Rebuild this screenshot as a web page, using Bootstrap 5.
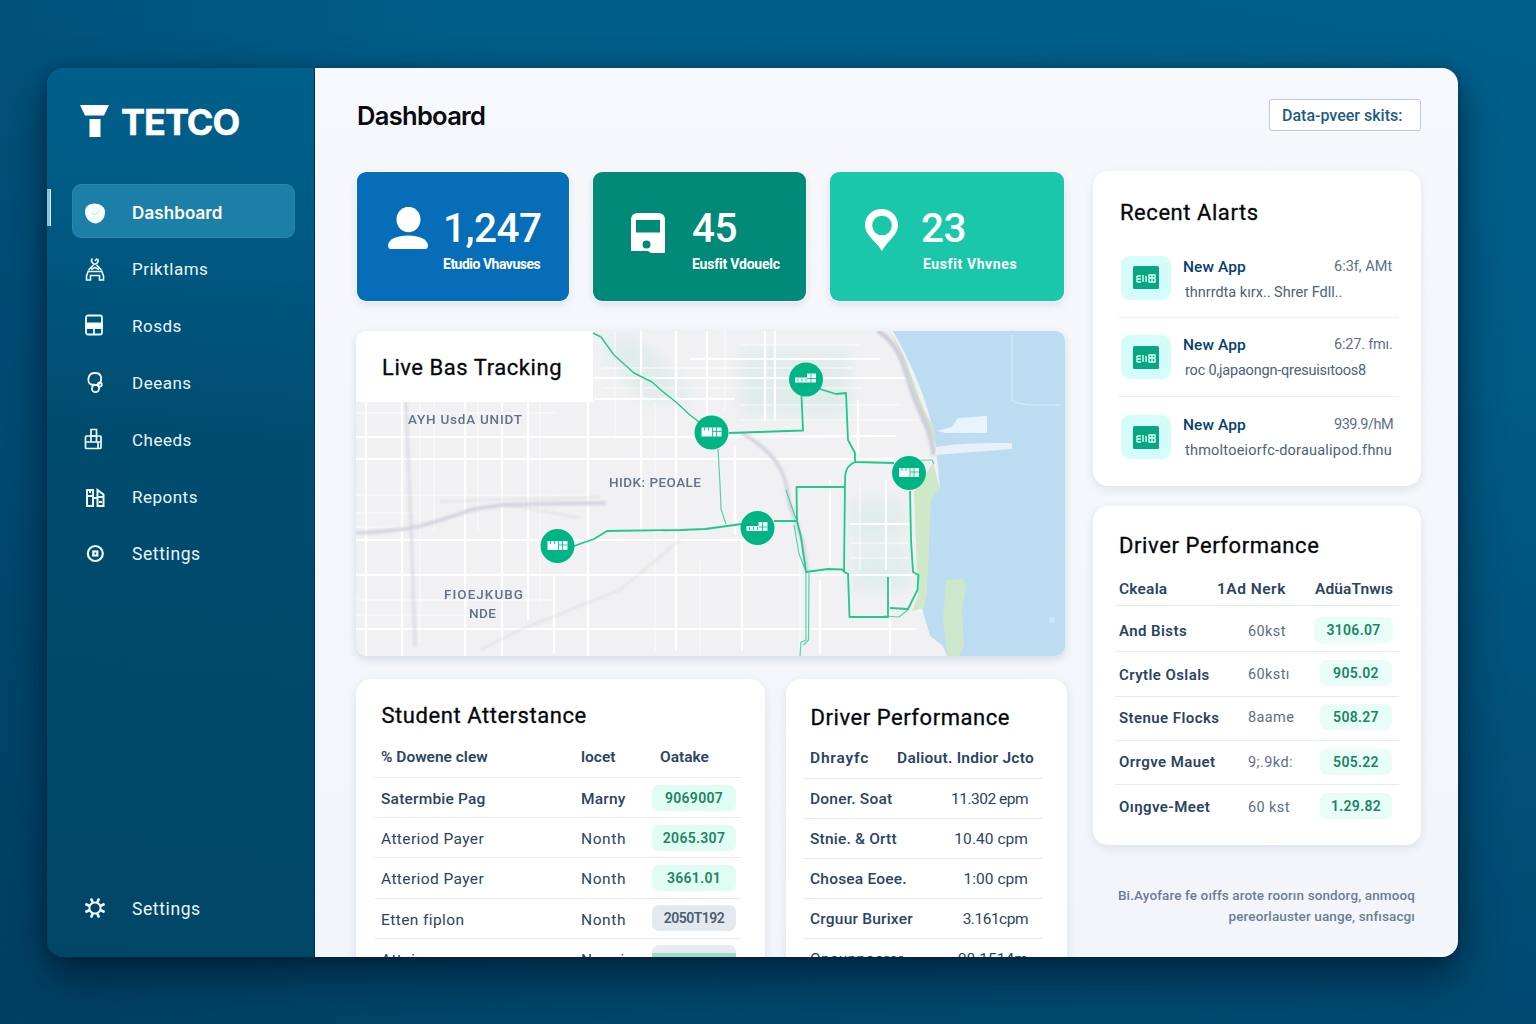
<!DOCTYPE html>
<html lang="en">
<head>
<meta charset="utf-8">
<meta name="viewport" content="width=device-width, initial-scale=1">
<title>TETCO Dashboard</title>
<link href="https://cdn.jsdelivr.net/npm/bootstrap@5.3.0/dist/css/bootstrap.min.css" rel="stylesheet">
<style>
:root{--ink:#2b4463;--line:#e6eaf2;--brand:#00b585}
body{width:1536px;height:1024px;overflow:hidden;margin:0;font-family:Roboto,"Liberation Sans",sans-serif;color:var(--ink);
 background:linear-gradient(90deg,rgba(0,50,85,.26) 0,rgba(0,50,85,.0) 30%),linear-gradient(190deg,#00608b 0%,#005b85 30%,#004f77 62%,#004468 100%);padding:68px 78px 67px 47px}
.app-window{height:889px;width:1411px;border-radius:16px;overflow:hidden;box-shadow:0 20px 44px rgba(0,20,40,.65),0 2px 12px rgba(0,20,45,.35)}
.side{width:268px;background:linear-gradient(185deg,#00608b 0%,#005a83 18%,#004c6f 42%,#004667 100%);border-right:1px solid #003059;position:relative}
.brand{height:116px;padding:37px 0 0 33px;gap:12px}
.brand-name{font:700 36px/34px Inter,sans-serif;color:#fff;letter-spacing:-1px;-webkit-text-stroke:.5px #fff}
.side .nav-link{height:54px;margin:0 19px 2.9px 25px;padding:0 0 0 11px;border-radius:9px;color:#e9f6fb;font-size:17px;letter-spacing:.5px;display:flex;align-items:center}
.side .nav-link svg{width:24px;height:24px;margin-right:25px;flex:none;position:relative;top:1px}
.side .nav-link.active{background:#1c7fa7;color:#fff;font:600 17px/24px Inter,sans-serif;letter-spacing:.1px;border:1px solid #2a86ac;padding-left:10px}
.side .nav-link span{position:relative;top:2px}
.side .nav-link.active svg{top:2px}
.side .nav-link.wide-text{letter-spacing:.6px;font-size:17.5px}
.side-mark{position:absolute;left:0;top:121px;width:4px;height:37px;background:#8dc4dc;border-right:1px solid #d5eef8}
.side .foot-link{margin-bottom:23px}
.main{background:linear-gradient(180deg,#f6f8fc,#f2f5fa);padding:0 37px 0 41px;flex:1;min-width:0}
.topbar{height:103px;padding-bottom:9px}
.page-title{font:600 25.5px/30px Inter,sans-serif;letter-spacing:-.7px;color:#0a0a12;margin:2px 0 0 1px}
.btn-range{width:152px;height:32px;border:1px solid #b9c8da;border-radius:3px;background:#fff;color:#1d5c80;font-size:16px;font-weight:500;padding:1px 0 0 12px;text-align:left;line-height:30px;letter-spacing:0}
.left-col{width:711px;flex:none;padding-top:1px}
.right-col{width:328px;flex:none;margin-left:26px}
.stats{gap:24px}
.stat{height:129px;border-radius:9px;color:#fff;box-shadow:0 0 0 1px #fff,0 3px 9px rgba(40,70,110,.14);padding-top:35px}
.stat-a{width:212px;background:#066db8;margin-left:1px;padding-left:31px;gap:15px}
.stat-b{width:213px;background:#028a78;padding-left:38px;gap:27px}
.stat-c{width:234px;background:#1bc7ab;padding-left:35px;gap:23px}
.stat svg{flex:none}
.stat-b svg{margin-top:6px}
.stat-c svg{margin-top:2px}
.stat-num{font-size:40.5px;font-weight:500;line-height:42px;white-space:nowrap;letter-spacing:-.5px}
.stat-lab{font-size:14px;font-weight:700;line-height:18px;white-space:nowrap;margin-top:6px}
.stat-a .stat-lab{letter-spacing:-.5px}
.stat-b .stat-lab{letter-spacing:-.2px}
.stat-c .stat-lab{letter-spacing:.6px;padding-left:2px}
.panel{background:#fff;border-radius:15px;box-shadow:0 3px 10px rgba(40,70,110,.11)}
.map-box{height:325px;width:709px;border-radius:10px;overflow:hidden;position:relative;box-shadow:0 3px 9px rgba(40,70,110,.16);margin-top:30px}
.map-title{position:absolute;left:0;top:0;width:237px;height:71px;background:#fff;padding:0 0 0 26px;line-height:73px}
.h-card{font-size:22px;font-weight:400;color:#05070d;letter-spacing:.55px;margin:0;white-space:nowrap;-webkit-text-stroke:.3px #05070d}
.lower{margin-top:23px}
.p-stu{width:409px;height:300px;padding:23px 24px 0 19px}
.p-drv{width:281px;height:300px;padding:25px 25px 0 18px}
.lower .h-card{margin-left:6.5px;position:relative;top:.5px}
.line-row{display:flex;align-items:center;border-bottom:1px solid var(--line);height:40.2px;font-size:15.5px;letter-spacing:.4px;white-space:nowrap}
.line-row>*{flex-shrink:0}
.line-row.hd{font-weight:600;letter-spacing:0}
.lower .line-row.hd{height:49.7px;padding-top:8px}
.p-drv .line-row.hd{height:48.3px}
.fw-5{font-weight:500;letter-spacing:.2px}
.pill{height:26px;border-radius:7px;background:#e0fdf3;color:#1c8463;font-weight:600;font-size:14px;line-height:26px;text-align:center;letter-spacing:.3px}
.pill-g{background:#e4e8ef;color:#4b5d73}
.pill-dim{background:linear-gradient(#e6ecef 8px,#9fdcc8 8px)}
.tight{letter-spacing:-.5px !important}
.p-stu .c1{width:206px;padding-left:6px}.p-stu .c2{width:77px}.p-stu .pill{width:84px;margin-left:-6px}
.p-stu .c2:not(.fw-5){letter-spacing:.6px}
.p-stu .hd .c2{letter-spacing:0 !important}
.p-stu .c3{padding-left:2px}
.p-stu .c1,.p-stu .c2{position:relative;top:2px}
.p-stu .hd .c1,.p-stu .hd .c2,.p-stu .c3,.p-drv .c1,.p-drv .c2{position:relative;top:1px}
.p-drv .c1{padding-left:6px}.p-drv .c2{margin-left:auto;padding-right:14px;letter-spacing:.05px}
.p-drv .hd .c2{padding-right:8px;letter-spacing:.25px}
.p-drv .hd .c1{letter-spacing:.8px}
.p-al{height:315px;padding:29px 22px 0 27px}
.al-list{margin:12px 0 0 -1px}
.al{height:79.5px;border-bottom:1px solid #eceff5}
.al:last-child{border:0}
.al-ic{width:50px;height:44px;border-radius:9px;background:#d3fcfa;flex:none;display:flex;align-items:center;justify-content:center;margin:0 12px 0 2px}
.al-body{padding-top:3px}
.al:first-child .al-body{padding-top:5px}
.al:nth-child(n+2) .al-body{padding-top:1px}
.al-name{font-size:15.5px;font-weight:500;color:#053f70;line-height:20px;letter-spacing:.1px}
.al-time{font-size:14.5px;color:#5d6f8a;line-height:20px;width:65px}
.al-msg{font-size:14.5px;color:#4d617e;line-height:20px;margin-top:6px;padding-left:2px;white-space:nowrap}
.al:nth-child(2) .al-msg,.al:nth-child(2) .al-time{letter-spacing:-.2px}
.al:nth-child(3) .al-msg{letter-spacing:.22px}
.al:nth-child(3) .al-time{letter-spacing:-.5px}
.p-pf{height:339px;margin-top:20px;padding:27px 22px 0 22px}
.p-pf .h-card{letter-spacing:.6px}
.p-pf .line-row{height:44.3px;font-size:15px}
.p-pf .line-row.hd{height:47px;font-size:15.5px;padding-top:13px}
.p-pf .hd+.line-row{height:46px;padding-top:3px}
.p-pf .line-row:last-child{border:0}
.p-pf .c1{width:133px;padding-left:4px;font-weight:600;letter-spacing:.42px}.p-pf .c2{width:66px;color:#5d6f8a;font-size:14.5px}
.p-pf span{position:relative;top:1px}
.p-pf .line-row:nth-child(n+5) span{top:0}
.p-pf .pill,.p-pf .line-row:nth-child(n+5) .pill{width:72px;font-size:14px;margin-left:auto;margin-right:7px;background:#e8fdf8;top:-1px}
.p-pf .pill.wide{width:79px;top:0}
.p-pf .hd .c1{width:102px;letter-spacing:.2px}
.p-pf .hc2{letter-spacing:.5px}
.p-pf .hc3{margin-left:auto;padding-right:6px;letter-spacing:.1px}
.foot-note{font-size:13.5px;line-height:21px;color:#6b7d94;margin-top:40px;padding-right:6px;font-weight:500;text-align:right;white-space:nowrap;letter-spacing:.12px}
</style>
<script src="https://cdn.jsdelivr.net/npm/bootstrap@5.3.0/dist/js/bootstrap.bundle.min.js"></script>
</head>
<body>
<div class="app-window d-flex">
  <aside class="side d-flex flex-column flex-shrink-0">
    <span class="side-mark"></span>
    <div class="brand d-flex align-items-start">
      <svg width="29" height="33" viewBox="0 0 29 33" fill="#fff"><path d="M0 0h29l-5 10.500H5z"/><path d="M9.500 14h11v18h-11z"/></svg>
      <span class="brand-name">TETCO</span>
    </div>
    <nav class="nav flex-column flex-nowrap">
      <a class="nav-link active" href="#"><svg viewBox="0 0 24 24"><path d="M2 11C2 5 6 3 11 2.500c6 0 11 3 11 8.500 0 6-4 11-9 11.500-5 0-10.500-4-11-11.500z" fill="#f4fdff"/><path d="M9 12l3 2 4-4" stroke="#c5e2ec" fill="none"/></svg><span>Dashboard</span></a>
      <a class="nav-link" href="#"><svg viewBox="0 0 24 24" fill="none" stroke="#eefaff" stroke-width="1.600"><path d="M9.500 1.500a3.200 3.200 0 1 0 5 .5M12 4l2-2.500M10.500 8l-5 5M13.500 8l5 5M8 12.500l4-2 4 2M5 14.500h14M5.500 13.500L3.500 19v4h4v-4.500h9V23h4v-4l-2-5.500"/></svg><span>Priktlams</span></a>
      <a class="nav-link" href="#"><svg viewBox="0 0 24 24" fill="none" stroke="#eefaff" stroke-width="1.800"><rect x="3" y="1.500" width="16" height="19" rx="2"/><path d="M3 9.500h16v4.500H3z" fill="#fff"/><path d="M11 15v5"/></svg><span>Rosds</span></a>
      <a class="nav-link" href="#"><svg viewBox="0 0 24 24" fill="none" stroke="#eefaff" stroke-width="1.800"><path d="M8 13.500C4 12 4 2 12 2c8 0 7 8 4 11l-3 1z"/><circle cx="12.500" cy="17.500" r="3.600"/><circle cx="16.800" cy="13.500" r="2"/></svg><span>Deeans</span></a>
      <a class="nav-link" href="#"><svg viewBox="0 0 24 24" fill="none" stroke="#eefaff" stroke-width="1.700"><rect x="2.500" y="8" width="15.500" height="12.500" rx="1"/><path d="M8 14V1.500h5.500V14M2.500 14H18M8 8h5M15 14.500v6"/></svg><span>Cheeds</span></a>
      <a class="nav-link" href="#"><svg viewBox="0 0 24 24" fill="none" stroke="#eefaff" stroke-width="2"><path d="M4 6h6v16H4zM4 12h6M7 6v3M10 14h4M14.500 22V6l6 4.500V22zM14 13h6M16 18h3"/></svg><span>Reponts</span></a>
      <a class="nav-link wide-text" href="#"><svg viewBox="0 0 24 24" fill="none" stroke="#eefaff" stroke-width="2.200"><circle cx="12.300" cy="12.500" r="7.500"/><rect x="10.300" y="10.500" width="4" height="4"/></svg><span>Settings</span></a>
    </nav>
    <a class="nav-link foot-link wide-text mt-auto" href="#"><svg viewBox="0 0 24 24" fill="none" stroke="#eefaff" stroke-width="2"><circle cx="12" cy="12" r="5.600"/><path d="M14.300 6.400l1.700-4M17.600 9.700l4-1.700M17.600 14.300l4 1.700M14.300 17.600l1.700 4M9.700 17.600l-1.700 4M6.400 14.300l-4 1.700M6.400 9.700l-4-1.700M9.700 6.400L8 2.400" stroke-width="2.600"/></svg><span>Settings</span></a>
  </aside>

  <main class="main">
    <header class="topbar d-flex align-items-center justify-content-between">
      <h1 class="page-title">Dashboard</h1>
      <button class="btn btn-range">Data-pveer skits:</button>
    </header>
    <div class="d-flex">
      <div class="left-col">
        <section class="stats d-flex">
          <div class="stat stat-a d-flex">
            <svg width="40" height="43" viewBox="0 0 40 43" fill="#fff"><ellipse cx="20.500" cy="12.500" rx="12" ry="12.700"/><path d="M0 38c1-6 9-9.500 20-9.500S39 32 40 38c0 3-1 4-3 4H3c-2 0-3-1-3-4z"/></svg>
            <div><div class="stat-num">1,247</div><div class="stat-lab">Etudio Vhavuses</div></div>
          </div>
          <div class="stat stat-b d-flex">
            <svg width="34" height="42" viewBox="0 0 34 42"><path d="M0 7q0-7 7-7h20q7 0 7 7v33H20l-3-2H0z" fill="#fff"/><path d="M5 7h24v12.500H5z" fill="#028a78"/><circle cx="15.500" cy="31.500" r="4" fill="#028a78"/></svg>
            <div><div class="stat-num">45</div><div class="stat-lab">Eusfit Vdouelc</div></div>
          </div>
          <div class="stat stat-c d-flex">
            <svg width="33" height="42" viewBox="0 0 33 42"><path d="M16.500 0C7 0 0 7 0 16c0 10 9 14 17 26C24 30 33 26 33 16 33 7 26 0 16.500 0z" fill="#fff"/><circle cx="17" cy="16.500" r="9.800" fill="#1bc7ab"/></svg>
            <div><div class="stat-num">23</div><div class="stat-lab">Eusfit Vhvnes</div></div>
          </div>
        </section>

        <section class="map-box">
          <svg width="709" height="325" viewBox="356 331 709 325">
            <defs>
              <filter id="soft"><feGaussianBlur stdDeviation="1"/></filter>
              <filter id="wide"><feGaussianBlur stdDeviation="9"/></filter>
              <g id="bus"><circle r="17" fill="#00b585"/><path d="M-10-5H10V4H-10z" fill="#f4fffb"/><path d="M-7-5v3M-3-5v3M1-5v9M5-5v9M1-1h9" stroke="#00b585" stroke-width=".8"/></g>
              <g id="depot"><circle r="17" fill="#00b585"/><path d="M-11-2H1V-6H10V3H-11z" fill="#f4fffb"/><path d="M-8-1v3M-4-1v3M0-1v3M5-6v9M1-1h9" stroke="#00b585" stroke-width=".8"/></g>
            </defs>
            <rect x="356" y="331" width="709" height="325" fill="#f1f1f3"/>
            <g fill="#00b878" opacity=".065" filter="url(#wide)"><path d="M740 350h110v65H740zM600 340h40l60 60h-60zM850 500h55v40h-55zM850 550h60v40h-60z"/></g>
            <g stroke="#fff" fill="none">
              <path d="M356 437h300l240-1M356 459h550M356 540h410M356 575h560M356 629h560M590 378h320M690 359h190M595 399h140M730 459h200M850 524h60" stroke-width="2"/>
              <path d="M366 400v256M402 400v256M465 400v256M502 400v256M528 400v220M554 574v80M588 402v254M641 331v200M676 331v320M707 331v100M735 445v90M742 540v110M765 331v90M775 331v90M830 480v85M886 480v90M820 580v75M858 400v55M890 580v75" stroke-width="2.200"/>
              <path d="M356 413h200M356 495h230M356 513h60M356 527h60M602 368h250M602 388h260M740 420h180M850 543h60M850 558h60M420 402v240M434 402v130M478 402v130M540 402v200M615 331v110M655 402v250M860 480v90M800 540v115M700 560v95M725 331v80M356 600h200M356 615h120M740 405h160M740 345h120" stroke-width="1" opacity=".8"/>
            </g>
            <g stroke="#cfcedb" fill="none" filter="url(#soft)">
              <path d="M406 402l6 150 3 95" stroke-width="3.500" opacity=".5"/>
              <path d="M356 533c60-3 70-8 100-18 30-12 60-11 150-12" stroke-width="4" opacity=".8"/>
              <path d="M440 502c50-4 100-2 160-5M500 503l80 15M480 650l40-20 100-40 60-50" stroke-width="2" opacity=".4"/>
              <path d="M742 433c30 18 45 35 47 70l14 40 4 28" stroke-width="4" opacity=".8"/>
            </g>
            <path d="M893 331H1065V656H947L943 646 930 636 922 608 927 592V558L930 498 940 488 937 458 935 440C928 400 912 365 893 331z" fill="#bcdcf1"/>
            <path d="M889 331c17 20 24 55 38 85 8 12 9 20 8 28l-8-14c-12-30-20-70-38-99zM914 492l19-29 7 25-9 12-4 90-3 18-12 3 6-15z" fill="#cfe8c8"/>
            <path d="M946 580l18-1 2 9-4 20 2 38-5 10h-12l-4-36z" fill="#cde7cb"/>
            <path d="M878 331c22 14 26 35 33 57 10 30 18 35 23 67" stroke="#cfcedb" stroke-width="5" fill="none" filter="url(#soft)"/>
            <path d="M958 418l29-2v17h-41l-9-2 15-4z" fill="#e9f3fb"/><path d="M936 447c20-4 50-4 76-4v6l-77 6z" fill="#e9f0f7"/>
            <path d="M1012 335v65q4 4 18 5h30" stroke="#dcedf8" fill="none"/>
            <rect x="1049" y="617" width="6" height="6" fill="#cce6f6"/>
            <g stroke="#1fc98a" stroke-width="1.800" fill="none" stroke-linejoin="round">
              <path d="M593 333l8 4 13 18 20 18 18 9 10 9 14 11 14 13 13 10" stroke-width="1.400"/>
              <path d="M729 433l74-2.500-1.500-35M820 389l16 5 10-1 2 47 7 13v9l39 1M855 462c-9 4-10 10-10 20l-1 89M797 522l-.5-35H845"/>
              <path d="M574 546l20-7 13-8 73-1 25-1 37-5M774 521h23l4 16 5 35 22-3 14 .500 3 3 3 1 1.500 43.500H888V577M910 491l1 49 2 32 5.500 3-1 15-9.500 19-18-1"/>
              <path d="M718 449l2 35 1 25 5 15M786 490l10 29M794 525l5 29 6 15M806 573v67l-5 2-1 14M809 573l-.5 67-5 5M884 616l15 1 10-8M921 460l11 0 2 4" stroke-width="1.200" opacity=".75"/>
            </g>
            <use href="#depot" x="806" y="379.500"/><use href="#bus" x="711.500" y="432.500"/><use href="#bus" x="909" y="473"/><use href="#depot" x="757.500" y="528"/><use href="#bus" x="557.500" y="546"/>
            <g font-family="Roboto,sans-serif" font-size="13.500" font-weight="500" fill="#61728a">
              <text x="408" y="424" textLength="114">AYH UsdA UNIDT</text>
              <text x="609" y="487" textLength="92">HIDK: PEOALE</text>
              <text x="444" y="599" textLength="79">FIOEJKUBG</text>
              <text x="469" y="618" textLength="27">NDE</text>
            </g>
          </svg>
          <h2 class="map-title h-card">Live Bas Tracking</h2>
        </section>

        <section class="lower d-flex justify-content-between">
          <div class="panel p-stu">
            <h2 class="h-card">Student Atterstance</h2>
            <div class="line-row hd"><span class="c1">% Dowene clew</span><span class="c2">locet</span><span class="c3">Oatake</span></div>
            <div class="line-row"><span class="c1 fw-5">Satermbie Pag</span><span class="c2 fw-5">Marny</span><span class="pill">9069007</span></div>
            <div class="line-row"><span class="c1">Atteriod Payer</span><span class="c2">Nonth</span><span class="pill">2065.307</span></div>
            <div class="line-row"><span class="c1">Atteriod Payer</span><span class="c2">Nonth</span><span class="pill">3661.01</span></div>
            <div class="line-row"><span class="c1">Etten fiplon</span><span class="c2">Nonth</span><span class="pill pill-g tight">2050T192</span></div>
            <div class="line-row"><span class="c1">Attainoum</span><span class="c2">Nonni</span><span class="pill pill-dim"></span></div>
          </div>
          <div class="panel p-drv">
            <h2 class="h-card">Driver Performance</h2>
            <div class="line-row hd"><span class="c1">Dhrayfc</span><span class="c2">Daliout. Indior Jcto</span></div>
            <div class="line-row"><span class="c1 fw-5">Doner. Soat</span><span class="c2 tight">11.302 epm</span></div>
            <div class="line-row"><span class="c1 fw-5">Stnie. &amp; Ortt</span><span class="c2">10.40 cpm</span></div>
            <div class="line-row"><span class="c1 fw-5">Chosea Eoee.</span><span class="c2">1:00 cpm</span></div>
            <div class="line-row"><span class="c1 fw-5">Crguur Burixer</span><span class="c2 tight">3.161cpm</span></div>
            <div class="line-row"><span class="c1">Onaunnoarer</span><span class="c2">08.1514m</span></div>
          </div>
        </section>
      </div>

      <div class="right-col">
        <section class="panel p-al">
          <h2 class="h-card">Recent Alarts</h2>
          <div class="al-list">
            <div class="al d-flex align-items-center"><div class="al-ic"><svg width="26" height="23"><rect width="26" height="23" rx="1.500" fill="#0aa583"/><path d="M4 10h4M4 13h4M4 16h4M4 10v6M10 9v7M13 10v6M16 9h6v7h-6zM16 12h6M19 9v7" stroke="#d9fff2" stroke-width="1.400" fill="none"/></svg></div><div class="al-body flex-grow-1"><div class="d-flex justify-content-between"><span class="al-name">New App</span><span class="al-time">6:3f, AMt</span></div><div class="al-msg">thnrrdta kırx.. Shrer Fdll..</div></div></div>
            <div class="al d-flex align-items-center"><div class="al-ic"><svg width="26" height="23"><rect width="26" height="23" rx="1.500" fill="#0aa583"/><path d="M4 10h4M4 13h4M4 16h4M4 10v6M10 9v7M13 10v6M16 9h6v7h-6zM16 12h6M19 9v7" stroke="#d9fff2" stroke-width="1.400" fill="none"/></svg></div><div class="al-body flex-grow-1"><div class="d-flex justify-content-between"><span class="al-name">New App</span><span class="al-time">6:27. fmı.</span></div><div class="al-msg">roc 0,japaongn-qresuisıtoos8</div></div></div>
            <div class="al d-flex align-items-center"><div class="al-ic"><svg width="26" height="23"><rect width="26" height="23" rx="1.500" fill="#0aa583"/><path d="M4 10h4M4 13h4M4 16h4M4 10v6M10 9v7M13 10v6M16 9h6v7h-6zM16 12h6M19 9v7" stroke="#d9fff2" stroke-width="1.400" fill="none"/></svg></div><div class="al-body flex-grow-1"><div class="d-flex justify-content-between"><span class="al-name">New App</span><span class="al-time">939.9/hM</span></div><div class="al-msg">thmoltoeiorfc-doraualipod.fhnu</div></div></div>
          </div>
        </section>
        <section class="panel p-pf">
          <h2 class="h-card ms-1">Driver Performance</h2>
          <div class="line-row hd"><span class="c1">Ckeala</span><span class="hc2">1Ad Nerk</span><span class="hc3">AdüaTnwıs</span></div>
          <div class="line-row"><span class="c1">And Bists</span><span class="c2">60kst</span><span class="pill wide">3106.07</span></div>
          <div class="line-row"><span class="c1">Crytle Oslals</span><span class="c2">60kstı</span><span class="pill">905.02</span></div>
          <div class="line-row"><span class="c1">Stenue Flocks</span><span class="c2">8aame</span><span class="pill">508.27</span></div>
          <div class="line-row"><span class="c1">Orrgve Mauet</span><span class="c2">9;.9kd:</span><span class="pill">505.22</span></div>
          <div class="line-row"><span class="c1">Oıŋgve-Meet</span><span class="c2">60 kst</span><span class="pill">1.29.82</span></div>
        </section>
        <div class="foot-note">Bi.Ayofare fe oıffs arote roorın sondorg, anmooq<br>pereorlauster uange, snfısacgı</div>
      </div>
    </div>
  </main>
</div>
</body>
</html>
